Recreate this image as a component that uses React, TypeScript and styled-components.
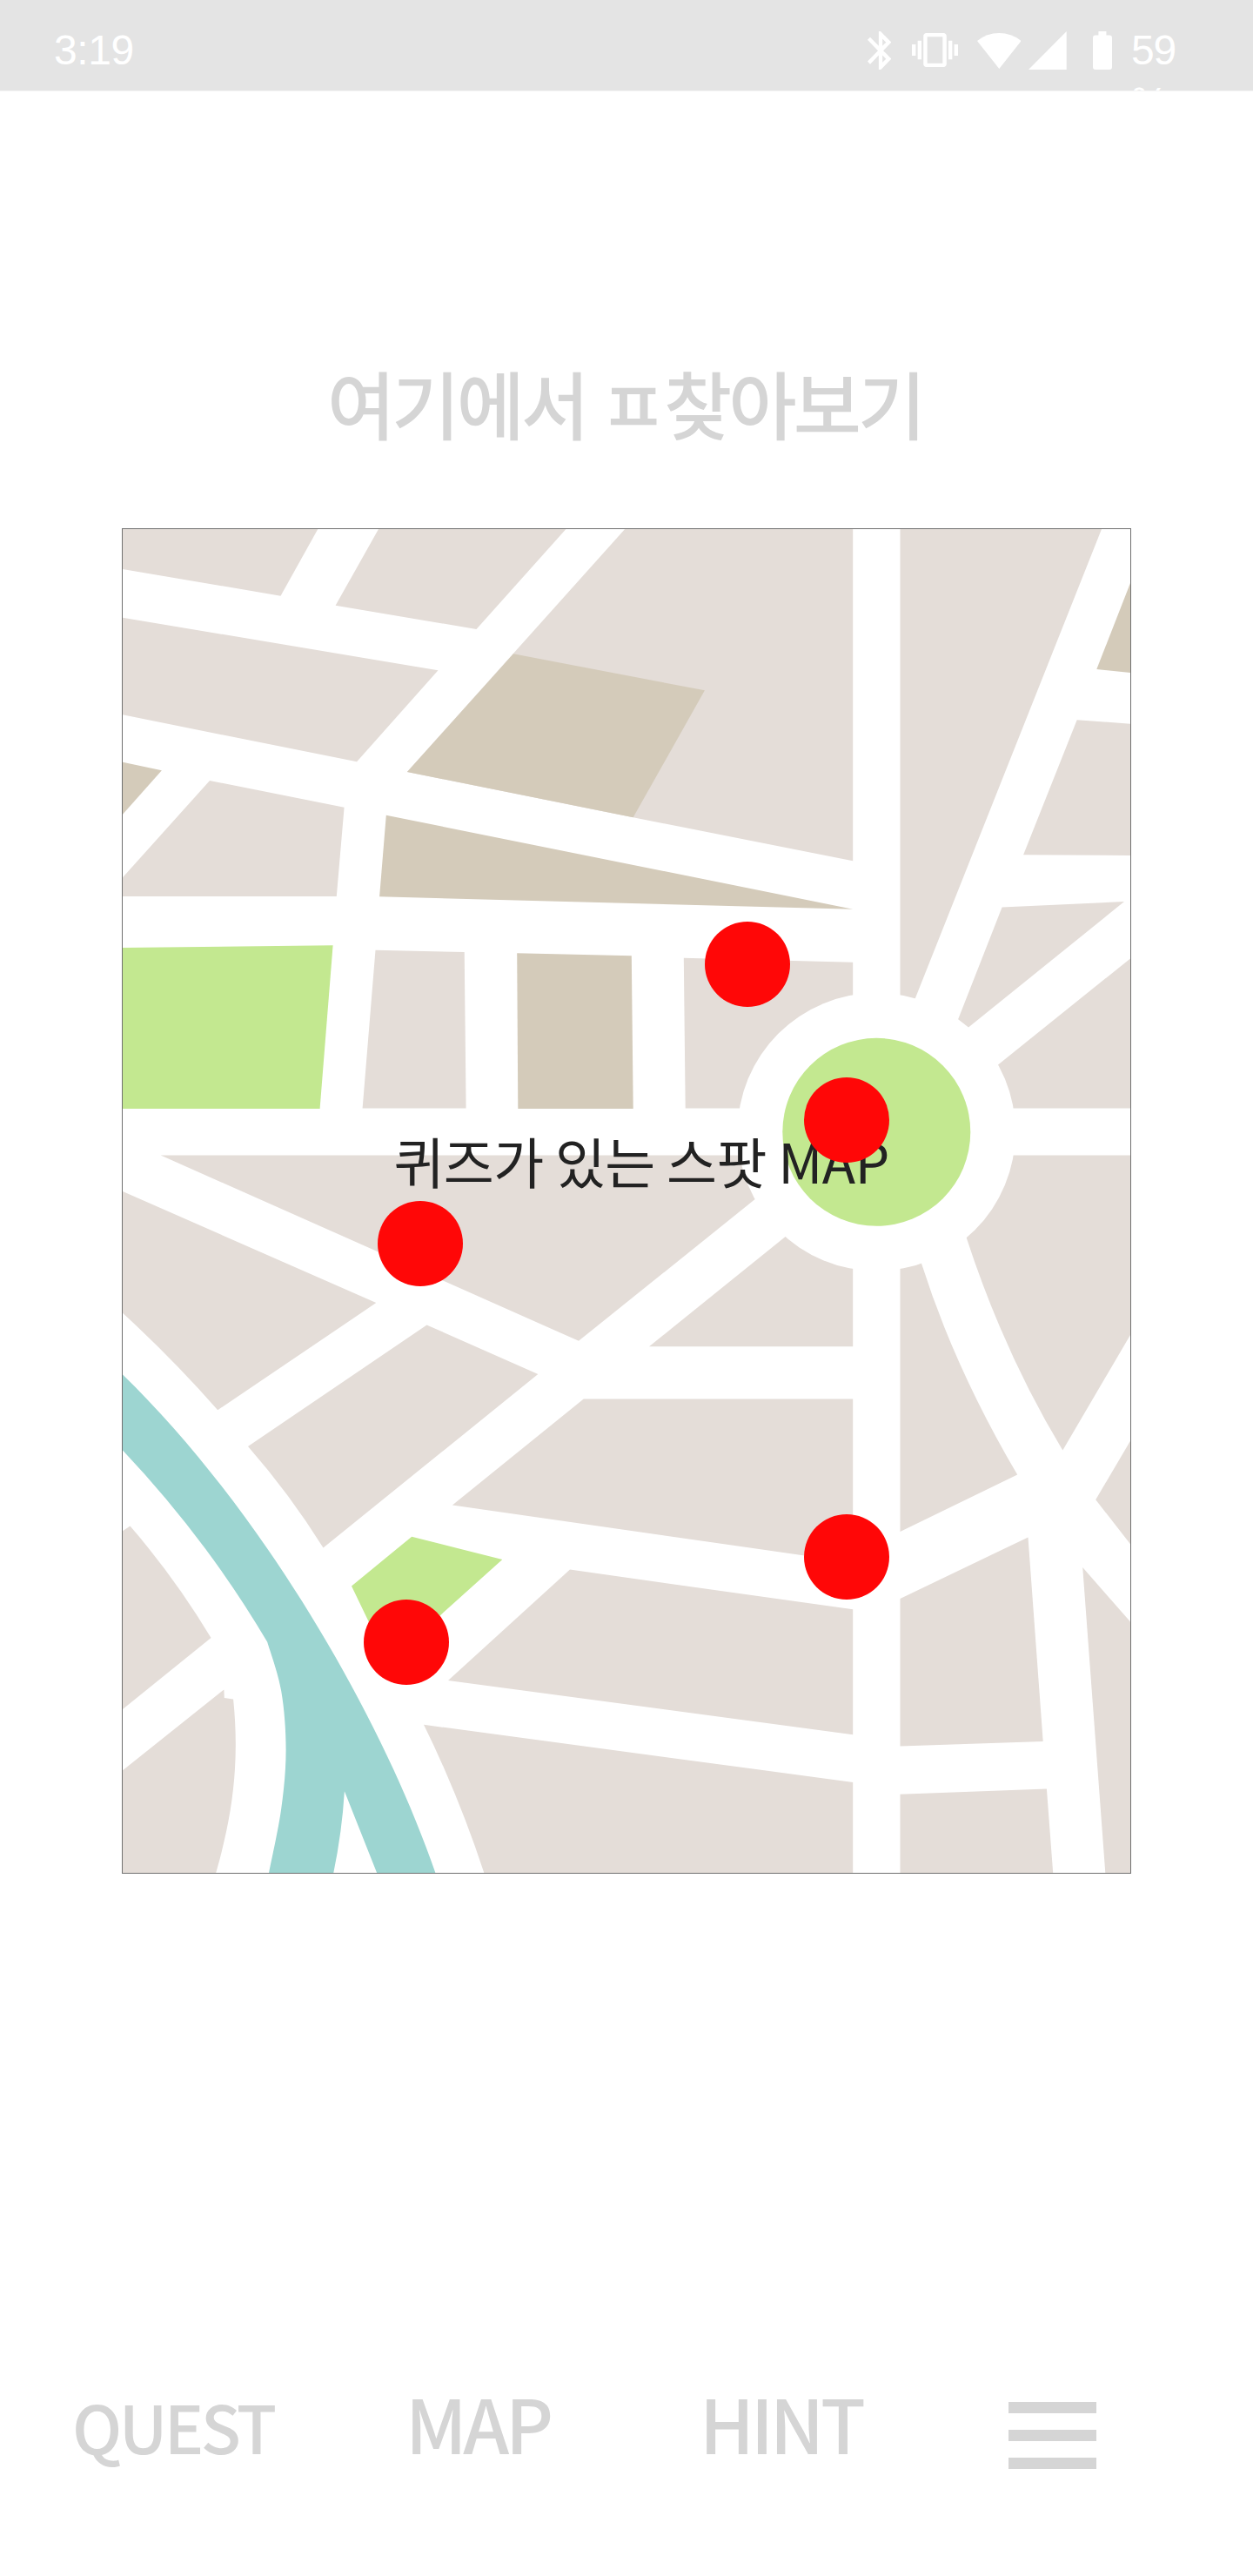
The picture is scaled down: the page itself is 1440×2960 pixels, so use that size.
import React from "react";
import styled, { createGlobalStyle } from "styled-components";

const GlobalStyle = createGlobalStyle`
  body {
    margin: 0;
    background: #ffffff;
  }
`;

const krFont = `"Noto Sans CJK KR", "Noto Sans", sans-serif`;

const Screen = styled.div`
  display: flex;
  flex-direction: column;
  width: 1440px;
  height: 2960px;
  overflow: hidden;
  background: #ffffff;
  font-family: ${krFont};
`;

const StatusBar = styled.header`
  display: flex;
  align-items: flex-start;
  justify-content: space-between;
  box-sizing: border-box;
  height: 105px;
  padding: 28px 78px 0 62px;
  overflow: hidden;
  background: #e4e4e4;
  border-bottom: 1px solid #f4f4f4;
  color: #ffffff;
  font-family: "Liberation Sans", Arial, sans-serif;
  font-size: 48px;
  line-height: 60px;
`;

const Clock = styled.span`
  letter-spacing: -0.4px;
`;

const StatusIcons = styled.div`
  display: flex;
  align-items: flex-start;
`;

const Glyph = styled.svg<{ $w: number; $h: number; $top: number; $gap: number }>`
  display: block;
  flex: none;
  width: ${(p) => p.$w}px;
  height: ${(p) => p.$h}px;
  margin-top: ${(p) => p.$top}px;
  margin-right: ${(p) => p.$gap}px;
  fill: #ffffff;
`;

const BatteryLevel = styled.span`
  width: 62px;
  letter-spacing: -1.2px;
`;

const Title = styled.h1`
  margin: 307px 0 0;
  padding-left: 376px;
  color: #d5d5d5;
  font-size: 85px;
  font-weight: 500;
  line-height: 100px;
  letter-spacing: -3.85px;
  white-space: nowrap;
`;

const MapFrame = styled.main`
  position: relative;
  box-sizing: border-box;
  flex: none;
  width: 1160px;
  height: 1546px;
  margin: 95px 0 0 140px;
  border: 1px solid #707070;
  background: #ffffff;
`;

const MapDrawing = styled.svg`
  display: block;
  width: 1158px;
  height: 1544px;
`;

const MapLabel = styled.p`
  position: absolute;
  top: 685px;
  left: 311.5px;
  margin: 0;
  color: #222222;
  font-size: 63px;
  line-height: 80px;
  letter-spacing: -0.63px;
  white-space: nowrap;
`;

const Spot = styled.button<{ $x: number; $y: number }>`
  position: absolute;
  left: ${(p) => p.$x}px;
  top: ${(p) => p.$y}px;
  width: 98px;
  height: 98px;
  padding: 0;
  border: 0;
  border-radius: 50%;
  background: #ff0707;
`;

const NavBar = styled.nav`
  display: grid;
  grid-template-columns: 383px 338px 351px 101px;
  align-items: baseline;
  margin-top: 580px;
  padding-left: 83px;
  color: #d5d5d5;
`;

const NavItem = styled.span<{ $size: number; $tracking: number }>`
  font-size: ${(p) => p.$size}px;
  font-weight: 500;
  line-height: 100px;
  letter-spacing: ${(p) => p.$tracking}px;
  white-space: nowrap;
`;

const Menu = styled.div`
  display: flex;
  flex-direction: column;
  align-self: start;
  gap: 19.4px;
  margin: 27px 0 0 4px;
`;

const MenuLine = styled.i`
  width: 101px;
  height: 12.6px;
  background: #d5d5d5;
`;

type Point = [number, number];

/** Bezier segments that run smoothly through the points, from the first one on. */
const curveThrough = (pts: Point[]) =>
  pts
    .slice(0, -1)
    .map((p1, i) => {
      const p2 = pts[i + 1];
      const p0 = pts[i - 1] ?? p1;
      const p3 = pts[i + 2] ?? p2;
      const c1 = [p1[0] + (p2[0] - p0[0]) / 6, p1[1] + (p2[1] - p0[1]) / 6];
      const c2 = [p2[0] - (p3[0] - p1[0]) / 6, p2[1] - (p3[1] - p1[1]) / 6];
      return `C${c1.join(" ")} ${c2.join(" ")} ${p2.join(" ")}`;
    })
    .join("");

const LAND = "#e4ddd8";
const BUILT = "#d4cbba";
const PARK = "#c3e890";
const WATER = "#9dd5d1";

const land = [
  "M141 608H365.3L322.5 684.7L141 654Z",
  "M435 608H650.4L547.5 723L385.6 695.7Z",
  "M141 709.7L503.5 770.3L410.1 875.3L141 821.3Z",
  "M241 896.9L395.6 927.7L386.8 1029.9H141V1008.3Z",
  "M718.1 608H980.2V989.3L727.7 939.3L467.9 887Z",
  "M1034.5 608H1266L1051.8 1147.2L1045 1165H1034.5Z",
  "M1237.7 827.2L1299 831.7V983L1176.1 982.3Z",
  "M1151.6 1042.4L1292 1036L1113 1180.6L1101.1 1171.3Z",
  "M1299 1101.4L1147 1223.6L1130 1240V1273.5H1299Z",
  "M431.5 1091.7L533.7 1094.1L535.6 1273.5H416.6Z",
  "M785.8 1100.7L980.2 1105.8V1273.5H787.7Z",
  "M184.7 1327.6H877V1370.5L665 1540.8Z",
  "M141 1368.9L432.3 1497.1L250.2 1620.2Q199 1562 141 1508.8Z",
  "M490.5 1522.5L618.3 1579L371.5 1778.6Q333 1717 285 1662.1Z",
  "M670.7 1607.5H980.2V1795.4L519.9 1729.6Z",
  "M746 1547.3L915 1411H980.2V1547.3Z",
  "M1150 1327.6H1299V1534L1221.3 1666.4Q1154.9 1556.9 1111.1 1423.4L1105 1400Z",
  "M1034.5 1440H1055.5L1059.4 1453Q1097.3 1572.4 1169.2 1694.6L1034.5 1760Z",
  "M1034.5 1837.1L1181.5 1766.4L1198.7 2001.1L1034.5 2006.4Z",
  "M1034.5 2061.8L1202.9 2055.4L1210.2 2152H1034.5Z",
  "M1299 1655.7L1259.2 1723.2L1299 1774.3Z",
  "M1244.2 1801.1L1299 1863.6V2152H1270.3Z",
  "M655 1803.6L980.2 1849.3V1993.2L515 1931.1Z",
  "M487 1981.8L980.2 2047.9V2152H556.3Q527 2063 487 1981.8Z",
  "M141 1759.3L149.5 1753.6Q201 1813 242.5 1882.1L141 1963.9Z",
  "M141 2034.3L257.4 1941.4L257.8 1951L268.1 1952.5C275 2020 269 2080 248.2 2152H141Z",
];

const built = [
  "M141 875.7L185.9 885.3L141 935.7Z",
  "M590 751.3L809.9 793.3L727.7 939.3L467.9 887Z",
  "M443.8 936.7L980.2 1044.7L436.1 1030.3Z",
  "M1299 670L1260.3 769L1299 773Z",
  "M594.2 1095.2L725.8 1098.3L727.7 1273.9H595.3Z",
];

const parks = [
  "M141 1089L382.6 1086.2L367.6 1273.9H141Z",
  "M473.2 1765.7L577.3 1792.1L506.5 1855.7L465 1893L440 1898L423.5 1862.9L404 1822.5Z",
];

const river =
  "M141 1579.4C290 1724 432 1955 500.4 2152" +
  "H433.1L395.9 2058.2Q393 2105 383.3 2152H309.1" +
  curveThrough([
    [309.1, 2152],
    [323.2, 2078.6],
    [328.6, 2010.7],
    [323.2, 1942.9],
    [307.2, 1886.8],
  ]) +
  "Q237 1768 141 1666.4Z";

const spots: Point[] = [
  [810, 1059],
  [924, 1238],
  [434, 1380],
  [924, 1740],
  [418, 1838],
];

function CityMap() {
  return (
    <MapDrawing viewBox="141 608 1158 1544">
      {land.map((d) => (
        <path key={d} d={d} fill={LAND} />
      ))}
      {built.map((d) => (
        <path key={d} d={d} fill={BUILT} />
      ))}
      {parks.map((d) => (
        <path key={d} d={d} fill={PARK} />
      ))}
      <path d={river} fill={WATER} />
      <circle cx="1007.3" cy="1300.7" r="159.7" fill="#ffffff" />
      <circle cx="1007.3" cy="1300.8" r="108" fill={PARK} />
    </MapDrawing>
  );
}

export default function App() {
  return (
    <>
      <GlobalStyle />
      <Screen>
        <StatusBar>
          <Clock>3:19</Clock>
          <StatusIcons>
            <Glyph $w={27.3} $h={44.3} $top={7.7} $gap={24} viewBox="5 2 12.71 20" preserveAspectRatio="none">
              <path d="M17.71 7.71L12 2h-1v7.59L6.41 5 5 6.41 10.59 12 5 17.59 6.41 19 11 14.41V22h1l5.71-5.71-4.3-4.29 4.3-4.29zM13 5.83l1.88 1.88L13 9.59V5.83zm1.88 10.46L13 18.17v-3.76l1.88 1.88z" />
            </Glyph>
            <Glyph $w={53} $h={39} $top={10} $gap={21.7} viewBox="0 3 24 18" preserveAspectRatio="none">
              <path d="M0 15h2V9H0v6zm3 2h2V7H3v10zm19-8v6h2V9h-2zm-3 8h2V7h-2v10zM16.5 3h-9C6.67 3 6 3.67 6 4.5v15c0 .83.67 1.5 1.5 1.5h9c.83 0 1.5-.67 1.5-1.5v-15c0-.83-.67-1.5-1.5-1.5zM16 19H8V5h8v14z" />
            </Glyph>
            <Glyph $w={50.6} $h={41} $top={9.7} $gap={9} viewBox="0 0 50.6 41">
              <path d="M25.3 41L0 9Q11 0 25.3 0T50.6 9Z" />
            </Glyph>
            <Glyph $w={43.7} $h={44} $top={7.7} $gap={30} viewBox="0 0 43.7 44">
              <path d="M43.7 0V44H0Z" />
            </Glyph>
            <Glyph $w={22} $h={44} $top={7.7} $gap={22} viewBox="0 0 22 44">
              <path d="M6.4 0H15.4V4.4H19Q22 4.4 22 7.4V41Q22 44 19 44H3Q0 44 0 41V7.4Q0 4.4 3 4.4H6.4Z" />
            </Glyph>
            <BatteryLevel>59 %</BatteryLevel>
          </StatusIcons>
        </StatusBar>
        <Title>여기에서 ㅍ찾아보기</Title>
        <MapFrame>
          <CityMap />
          <MapLabel>퀴즈가 있는 스팟 MAP</MapLabel>
          {spots.map(([x, y]) => (
            <Spot key={`${x}-${y}`} $x={x - 141} $y={y - 608} aria-label="퀴즈 스팟" />
          ))}
        </MapFrame>
        <NavBar>
          <NavItem $size={76} $tracking={-3.6}>QUEST</NavItem>
          <NavItem $size={85} $tracking={-4.25}>MAP</NavItem>
          <NavItem $size={85} $tracking={-4.25}>HINT</NavItem>
          <Menu>
            <MenuLine />
            <MenuLine />
            <MenuLine />
          </Menu>
        </NavBar>
      </Screen>
    </>
  );
}
